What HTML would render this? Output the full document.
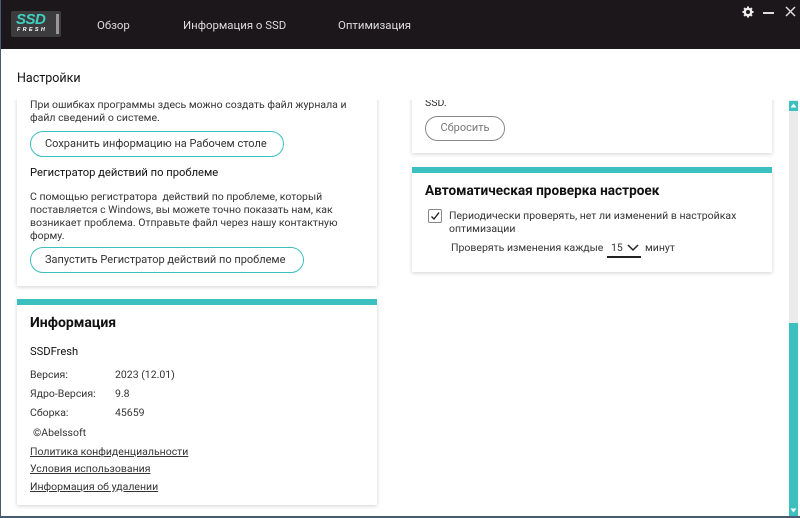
<!DOCTYPE html>
<html><head><meta charset="utf-8"><style>
*{margin:0;padding:0;box-sizing:border-box}
body{width:800px;height:518px;overflow:hidden;background:#fff;font-family:"Roboto","Liberation Sans",sans-serif;color:#222;position:relative}
.hdr{position:absolute;left:0;top:0;width:800px;height:49px;background:#1b171b}
.nav{position:absolute;top:18px;color:#ddd;font-size:11.4px}
.logo{position:absolute;left:11px;top:11px;width:50px;height:26px;background:#3c3c3e;border-radius:2px}
.card{position:absolute;background:#fff;box-shadow:0 1px 4px rgba(0,0,0,.18)}
.bar{position:absolute;height:6px;background:#3bbfbf}
.t{position:absolute;font-size:10.5px;color:#333;line-height:13px;white-space:nowrap}
.btn{position:absolute;border:1.5px solid #3bbfbf;border-radius:13px;height:26px;font-size:11px;color:#333;line-height:23px;padding-left:14px;white-space:nowrap}
u{text-decoration:underline}
</style></head><body>
<div class="hdr">
 <div class="logo">
  <div style="position:absolute;left:5px;top:0px;font:italic bold 15px 'Liberation Sans',sans-serif;color:#3fd0c0;letter-spacing:-0.5px">SSD</div>
  <div style="position:absolute;left:6px;top:16px;font:italic bold 5.5px 'Liberation Sans',sans-serif;color:#fff;letter-spacing:2.3px">FRESH</div>
  <div style="position:absolute;left:45px;top:3px;width:3px;height:20px;background:#999"></div>
 </div>
 <div class="nav" style="left:97px">Обзор</div>
 <div class="nav" style="left:183px">Информация о SSD</div>
 <div class="nav" style="left:338px">Оптимизация</div>
 <svg style="position:absolute;left:742px;top:6px" width="12" height="12" viewBox="0 0 12 12"><circle cx="6" cy="6" r="3.2" fill="none" stroke="#eee" stroke-width="2.4"/><g stroke="#eee" stroke-width="2"><path d="M6 0.5v2M6 9.5v2M0.5 6h2M9.5 6h2M2.1 2.1l1.4 1.4M8.5 8.5l1.4 1.4M2.1 9.9l1.4-1.4M8.5 3.5l1.4-1.4"/></g></svg>
 <div style="position:absolute;left:763px;top:12px;width:11px;height:1.5px;background:#ddd"></div>
 <svg style="position:absolute;left:785px;top:6px" width="11" height="11"><path d="M1 1L10 10M10 1L1 10" stroke="#ddd" stroke-width="1.5"/></svg>
</div>
<div style="position:absolute;left:17px;top:71px;font-size:12.5px;color:#111">Настройки</div>

<div style="position:absolute;left:0;top:100px;width:788px;height:200px;overflow:hidden">
<div style="position:absolute;left:0;top:-100px;width:788px;height:300px">
<div class="card" style="left:17px;top:80px;width:360px;height:206px"></div>
<div class="t" style="left:30px;top:98px">При ошибках программы здесь можно создать файл журнала и</div>
<div class="t" style="left:30px;top:111px">файл сведений о системе.</div>
<div class="btn" style="left:30px;top:131px;width:254px">Сохранить информацию на Рабочем столе</div>
<div class="t" style="left:30px;top:166px;font-size:11.2px;color:#111">Регистратор действий по проблеме</div>
<div class="t" style="left:30px;top:190px">С помощью регистратора&nbsp; действий по проблеме, который</div>
<div class="t" style="left:30px;top:203px">поставляется с Windows, вы можете точно показать нам, как</div>
<div class="t" style="left:30px;top:216px">возникает проблема. Отправьте файл через нашу контактную</div>
<div class="t" style="left:30px;top:229px">форму.</div>
<div class="btn" style="left:30px;top:247px;width:274px">Запустить Регистратор действий по проблеме</div>

<div class="card" style="left:412px;top:80px;width:360px;height:73px"></div>
<div class="t" style="left:425px;top:96px">SSD.</div>
<div style="position:absolute;left:425px;top:116px;width:80px;height:25px;border:1.3px solid #888;border-radius:13px;font-size:11px;color:#777;text-align:center;line-height:22px">Сбросить</div>
</div></div>

<div class="card" style="left:17px;top:300px;width:360px;height:205px"></div>
<div class="bar" style="left:17px;top:299px;width:360px"></div>
<div class="t" style="left:30px;top:315px;font-size:14px;font-weight:bold;color:#111;line-height:16px">Информация</div>
<div class="t" style="left:30px;top:345px;font-size:11.2px;color:#111">SSDFresh</div>
<div class="t" style="left:30px;top:368px">Версия:</div><div class="t" style="left:115px;top:368px">2023 (12.01)</div>
<div class="t" style="left:30px;top:387px">Ядро-Версия:</div><div class="t" style="left:115px;top:387px">9.8</div>
<div class="t" style="left:30px;top:406px">Сборка:</div><div class="t" style="left:115px;top:406px">45659</div>
<div class="t" style="left:33px;top:426px">©Abelssoft</div>
<div class="t" style="left:30px;top:445px"><u>Политика конфиденциальности</u></div>
<div class="t" style="left:30px;top:462px"><u>Условия использования</u></div>
<div class="t" style="left:30px;top:480px"><u>Информация об удалении</u></div>

<div class="card" style="left:412px;top:168px;width:360px;height:104px"></div>
<div class="bar" style="left:412px;top:167px;width:360px"></div>
<div class="t" style="left:425px;top:183px;font-size:13.6px;font-weight:bold;color:#111;line-height:16px">Автоматическая проверка настроек</div>
<div style="position:absolute;left:428px;top:209px;width:14px;height:14px;border:1px solid #888;border-radius:2px"></div>
<svg style="position:absolute;left:429px;top:210px" width="12" height="12"><path d="M2.5 6.5L5 9L10 2.5" stroke="#222" stroke-width="1.4" fill="none"/></svg>
<div class="t" style="left:449px;top:209px">Периодически проверять, нет ли изменений в настройках</div>
<div class="t" style="left:449px;top:222px">оптимизации</div>
<div class="t" style="left:451px;top:241px">Проверять изменения каждые</div>
<div class="t" style="left:611px;top:241px">15</div>
<svg style="position:absolute;left:627px;top:244px" width="12" height="8"><path d="M1 1L6 6L11 1" stroke="#222" stroke-width="1.5" fill="none"/></svg>
<div style="position:absolute;left:607px;top:256px;width:34px;height:1.5px;background:#222"></div>
<div class="t" style="left:645px;top:241px">минут</div>

<div style="position:absolute;left:789px;top:100px;width:9px;height:416px;background:#ebebeb"></div>
<div style="position:absolute;left:789px;top:101px;width:9px;height:10px;background:#3bbfbf"></div>
<svg style="position:absolute;left:790px;top:103px" width="7" height="5"><path d="M0.5 4.5L3.5 0.5L6.5 4.5Z" fill="#fff"/></svg>
<div style="position:absolute;left:789px;top:323px;width:9px;height:193px;background:#3bbfbf"></div>
<svg style="position:absolute;left:790px;top:508px" width="7" height="5"><path d="M0.5 0.5L3.5 4.5L6.5 0.5Z" fill="#fff"/></svg>
<div style="position:absolute;left:0;top:516px;width:800px;height:2px;background:#4a5a70"></div>
<div style="position:absolute;left:0;top:0;width:1px;height:518px;background:#4a5a70"></div>
</body></html>
